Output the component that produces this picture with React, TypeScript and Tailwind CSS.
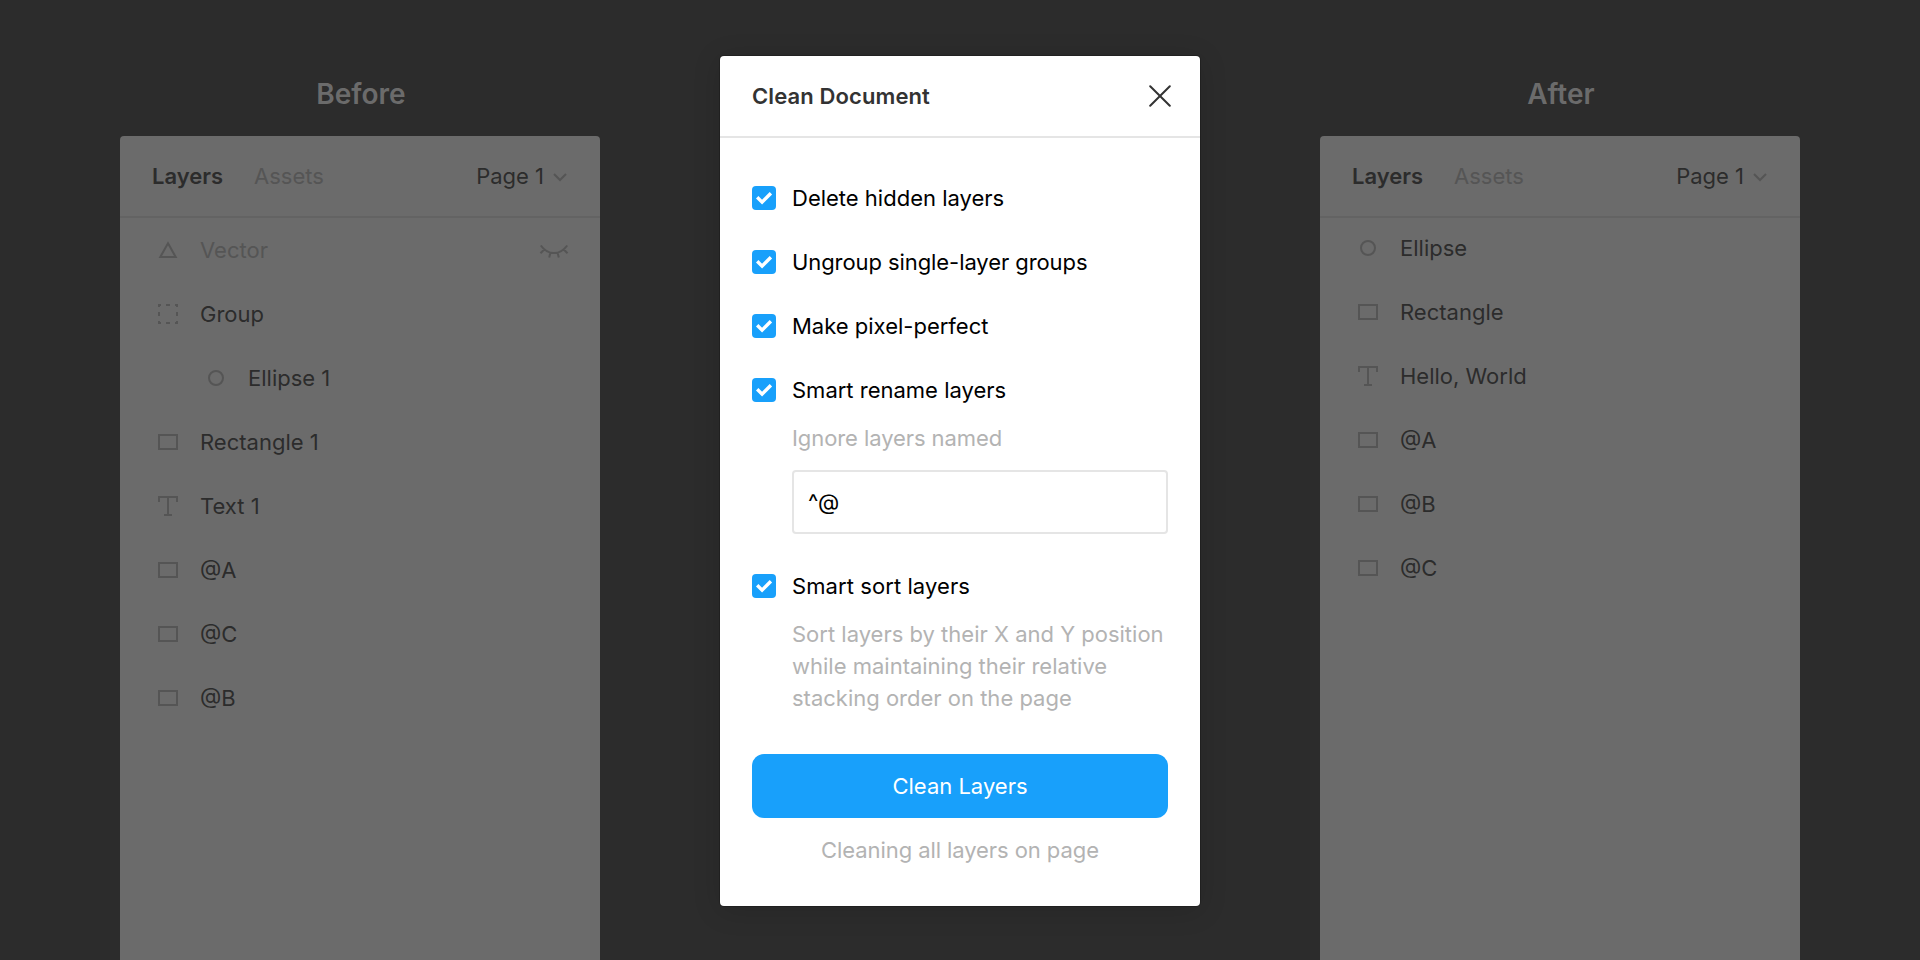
import type { ReactNode } from "react";

type LayerType = "vector" | "group" | "ellipse" | "rectangle" | "text";

interface Layer {
  name: string;
  type: LayerType;
  nested?: boolean;
  hidden?: boolean;
}

const beforeLayers: Layer[] = [
  { name: "Vector", type: "vector", hidden: true },
  { name: "Group", type: "group" },
  { name: "Ellipse 1", type: "ellipse", nested: true },
  { name: "Rectangle 1", type: "rectangle" },
  { name: "Text 1", type: "text" },
  { name: "@A", type: "rectangle" },
  { name: "@C", type: "rectangle" },
  { name: "@B", type: "rectangle" },
];

const afterLayers: Layer[] = [
  { name: "Ellipse", type: "ellipse" },
  { name: "Rectangle", type: "rectangle" },
  { name: "Hello, World", type: "text" },
  { name: "@A", type: "rectangle" },
  { name: "@B", type: "rectangle" },
  { name: "@C", type: "rectangle" },
];

const shapes: Record<LayerType, ReactNode> = {
  vector: <path d="M16 9.200 23.700 23H8.300Z" />,
  group: (
    <path
      d="M6 6h3v2h-1v1H6zM14 6h4v2h-4zM23 6h3v3h-2v-1h-1zM6 14h2v4H6zM24 14h2v4h-2zM6 23h2v1h1v2H6zM14 24h4v2h-4zM24 23h2v3h-3v-2h1z"
      fill="currentColor"
      stroke="none"
    />
  ),
  ellipse: <circle cx="16" cy="16" r="7" />,
  rectangle: <path d="M7 9h18v14H7z" />,
  text: <path d="M7 12V7h18v5M16 7v18M12 25h8" />,
};

function LayerIcon({ type }: { type: LayerType }) {
  return (
    <svg viewBox="0 0 32 32" className="size-8 shrink-0 text-[#555]" fill="none" stroke="currentColor" strokeWidth="2">
      {shapes[type]}
    </svg>
  );
}

function ClosedEye() {
  return (
    <svg viewBox="0 0 32 16" className="ml-auto h-4 w-8 text-[#555]" fill="none" stroke="currentColor" strokeWidth="2">
      <path d="M2.800 3.500C6 8 10.500 11 16 11s10-3 13.200-7.500M6.200 7.500l-3.700 3.700M25.800 7.500l3.700 3.700M12.500 10.500l-1.300 5M19.500 10.500l1.300 5" />
    </svg>
  );
}

function Panel({ title, layers, className }: { title: string; layers: Layer[]; className: string }) {
  return (
    <section className="flex w-[480px] flex-col">
      <h2 className="flex h-[136px] items-end justify-center pb-[25px] pl-[2px] text-[28px] leading-[34px] font-semibold text-[#6b6b6b]">
        {title}
      </h2>
      <div className="flex-1 rounded-t-[4px] bg-[#6b6b6b]">
        <header className="flex h-[82px] items-center border-b-2 border-[#636363] px-8">
          <span className="font-semibold">Layers</span>
          <span className="ml-[31px] text-[#555]">Assets</span>
          <span className="ml-auto">Page 1</span>
          <svg viewBox="0 0 16 16" className="ml-2 size-4 text-[#555]" fill="none" stroke="currentColor" strokeWidth="2">
            <path d="m2 6 6 6 6-6" />
          </svg>
        </header>
        <ul className={className}>
          {layers.map((layer) => (
            <li
              key={layer.name}
              className={`flex h-16 items-center gap-4 pr-[30px] ${layer.nested ? "pl-20" : "pl-8"} ${layer.hidden ? "text-[#555]" : ""}`}
            >
              <LayerIcon type={layer.type} />
              {layer.name}
              {layer.hidden && <ClosedEye />}
            </li>
          ))}
        </ul>
      </div>
    </section>
  );
}

function Option({ label, className = "" }: { label: string; className?: string }) {
  return (
    <div className={`flex h-16 items-center gap-4 ${className}`}>
      <span className="flex size-6 shrink-0 items-center justify-center rounded-[4px] bg-[#18a0fb]">
        <svg viewBox="0 0 24 24" className="size-6" fill="none" stroke="#fff" strokeWidth="3.400">
          <path d="m5.200 11.200 4.900 4.900 8.800-8.800" />
        </svg>
      </span>
      {label}
    </div>
  );
}

function Dialog() {
  return (
    <section className="mt-14 flex h-[850px] w-[480px] flex-col rounded-[4px] bg-white text-black shadow-[0_4px_28px_rgba(0,0,0,0.15),0_0_0_1px_rgba(0,0,0,0.2)]">
      <header className="flex h-[82px] items-center justify-between border-b-2 border-[#e5e5e5] pr-[29px] pl-8 text-[#333]">
        <h1 className="font-semibold tracking-[0.005em]">Clean Document</h1>
        <svg
          viewBox="0 0 22 22"
          className="size-[22px]"
          fill="none"
          stroke="currentColor"
          strokeWidth="2"
          strokeLinecap="round"
        >
          <path d="m1.200 1.200 19.600 19.600M20.800 1.200 1.200 20.800" />
        </svg>
      </header>
      <div className="flex flex-col px-8 pt-7">
        <Option label="Delete hidden layers" />
        <Option label="Ungroup single-layer groups" className="tracking-[-0.08px]" />
        <Option label="Make pixel-perfect" />
        <Option label="Smart rename layers" />
        <p className="ml-10 leading-8 tracking-[-0.08px] text-[#b3b3b3]">Ignore layers named</p>
        <div className="mt-4 ml-10 flex h-16 items-center rounded-[4px] border-2 border-[#e5e5e5] px-[14px]">^@</div>
        <div className="mt-5">
          <Option label="Smart sort layers" className="tracking-[0.08px]" />
        </div>
        <p className="ml-10 leading-8 whitespace-nowrap text-[#b3b3b3]">
          Sort layers by their X and Y position
          <br />
          while maintaining their relative
          <br />
          stacking order on the page
        </p>
        <button className="mt-10 h-16 rounded-xl bg-[#18a0fb] text-white">Clean Layers</button>
        <p className="mt-4 text-center leading-8 tracking-[-0.08px] text-[#b3b3b3]">Cleaning all layers on page</p>
      </div>
    </section>
  );
}

export default function App() {
  return (
    <main className="flex h-[960px] w-[1920px] justify-between overflow-hidden bg-[#2c2c2c] px-[120px] font-['Inter',sans-serif] text-[22px] leading-8 tracking-normal text-[#2c2c2c] antialiased">
      <Panel title="Before" layers={beforeLayers} className="" />
      <Dialog />
      <Panel title="After" layers={afterLayers} className="-mt-0.5" />
    </main>
  );
}
